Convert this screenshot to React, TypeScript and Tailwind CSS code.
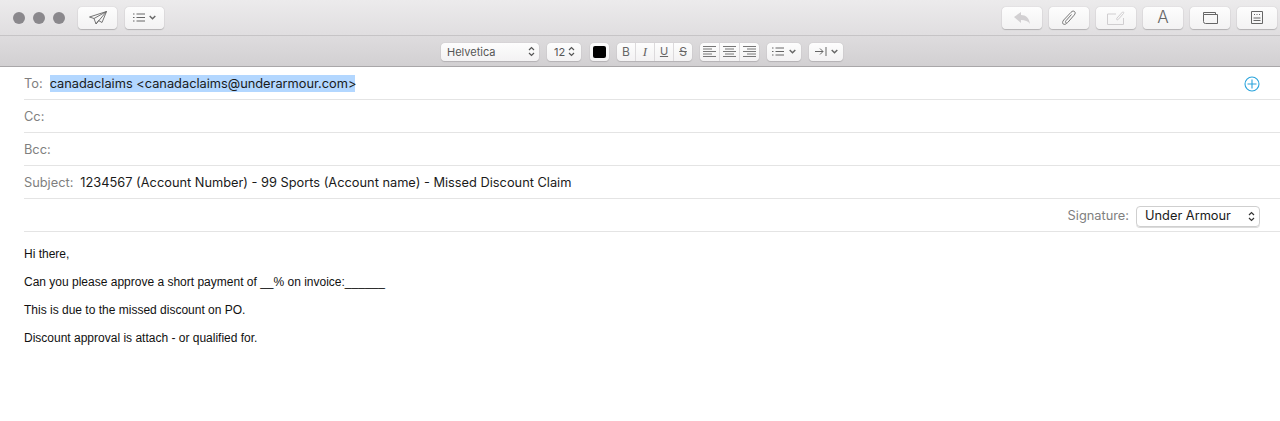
import React from 'react'

const btn = 'flex items-center rounded-[4px] bg-gradient-to-b from-[#fdfdfd] to-[#f3f2f3] shadow-[0_0_1px_#a9a7a9,0_1px_1px_#b5b3b5]'
const sans = 'font-["Inter",sans-serif]'

function Chevrons({ color = '#555' }: { color?: string }) {
    return (
        <svg width='7' height='11' viewBox='0 0 7 11' fill='none' stroke={color} strokeWidth='1.2'>
            <path d='M1 4l2.5-2.5L6 4' />
            <path d='M1 7l2.5 2.5L6 7' />
        </svg>
    )
}

function Chevron() {
    return (
        <svg width='7' height='5' viewBox='0 0 7 5' fill='none' stroke='#666' strokeWidth='1.4'>
            <path d='M.7.9l2.8 2.8L6.3.9' />
        </svg>
    )
}

function ListIcon({ w = 12 }: { w?: number }) {
    return (
        <svg width={w} height='9' viewBox='0 0 12 9' fill='none' stroke='#666' strokeWidth='1'>
            <path d='M0 1h1.500M0 4.500h1.500M0 8h1.500M3.500 1H12M3.500 4.500H12M3.500 8H12' />
        </svg>
    )
}

function AlignIcon({ kind }: { kind: 'left' | 'center' | 'right' }) {
    const d = {
        left: 'M0 .5h13M0 3h9M0 5.500h13M0 8h9M0 10.500h13',
        center: 'M0 .5h13M2 3h9M0 5.500h13M2 8h9M0 10.500h13',
        right: 'M0 .5h13M4 3h9M0 5.500h13M4 8h9M0 10.500h13',
    }[kind]
    return (
        <svg width='13' height='11' viewBox='0 0 13 11' fill='none' stroke='#777' strokeWidth='1'>
            <path d={d} />
        </svg>
    )
}

function Toolbar() {
    return (
        <div className='flex h-[36px] items-center justify-between border-b border-[#c6c4c6] bg-gradient-to-b from-[#ecebec] to-[#e0dee0] pl-[13px] pr-[3px]'>
            <div className='flex items-center'>
                <div className='h-[12px] w-[12px] rounded-full bg-[#8a888c]'></div>
                <div className='ml-[8px] h-[12px] w-[12px] rounded-full bg-[#8a888c]'></div>
                <div className='ml-[8px] h-[12px] w-[12px] rounded-full bg-[#8a888c]'></div>
                <div className={`${btn} ml-[13px] h-[22px] w-[39px] justify-center`}>
                    <svg width='18' height='14' viewBox='0 0 18 14' fill='none' stroke='#666' strokeWidth='0.9' strokeLinejoin='round'>
                        <path d='M17.500.5L.5 6l4.500 1.500L7 13l2.500-3.500 3.500 2zM17.500.5L5 7.500M17.500.5L7 13' />
                    </svg>
                </div>
                <div className={`${btn} ml-[8px] h-[22px] w-[39px] justify-center gap-[4px]`}>
                    <ListIcon />
                    <Chevron />
                </div>
            </div>
            <div className='flex items-center gap-[7px]'>
                <div className={`${btn} h-[22px] w-[40px] justify-center`}>
                    <svg width='16' height='12' viewBox='0 0 16 12' fill='#d2d0d2'>
                        <path d='M0 5l7-5v3c5 0 8 3 9 9-2-3-5-4-9-4v3z' />
                    </svg>
                </div>
                <div className={`${btn} h-[22px] w-[40px] justify-center`}>
                    <svg width='14' height='15' viewBox='0 0 14 15' fill='none' stroke='#777' strokeWidth='1'>
                        <path d='M9.500 4.500L4 10.700c-.8 1-.6 1.700-.1 2.100.5.400 1.200.4 2-.5l6.200-7.100c1.300-1.500 1.400-2.800.5-3.600-1-.9-2.400-.6-3.600.7L1.700 10c-1.500 1.800-1.300 3.200-.5 4 .9.700 2.300.5 3.500-.8' />
                    </svg>
                </div>
                <div className={`${btn} h-[22px] w-[40px] justify-center`}>
                    <svg width='18' height='14' viewBox='0 0 18 14' fill='none' stroke='#d0ced0' strokeWidth='1'>
                        <path d='M9 3H.5v10.500h16V7' />
                        <path d='M15.500 1L10 7c-1 1.200 0 2.500 1.200 1.500l5.300-6c.8-1-.2-2-1-1.500z' />
                    </svg>
                </div>
                <div className={`${btn} h-[22px] w-[40px] justify-center font-["Inter",sans-serif] text-[17px] font-light text-[#666]`}>A</div>
                <div className={`${btn} h-[22px] w-[40px] justify-center`}>
                    <svg width='15' height='12' viewBox='0 0 15 12' fill='none' stroke='#666' strokeWidth='1'>
                        <path d='M.5 2.500V.5h12v2' />
                        <path d='M.5 2.500h14v9h-12a2 2 0 0 1 -2-2z' />
                    </svg>
                </div>
                <div className={`${btn} h-[22px] w-[40px] justify-center`}>
                    <svg width='12' height='13' viewBox='0 0 12 13' fill='none' stroke='#666' strokeWidth='1'>
                        <path d='M.5.5h11v12H.5zM3 3.500h1M5.500 3.500h1M8 3.500h1M2.500 7h7M2.500 9.500h7' />
                    </svg>
                </div>
            </div>
        </div>
    )
}

function FormatBar() {
    const seg = 'flex h-full items-center justify-center border-r border-[#dcdadc]'
    return (
        <div className='flex h-[31px] items-center justify-center border-b border-[#a9a7a9] bg-gradient-to-b from-[#dedcde] to-[#d2d0d2] pl-[4px] pt-[1px]'>
            <div className={`${btn} h-[18px] w-[98px] justify-between pl-[6px] pr-[4px] ${sans} text-[11px] text-[#555]`}>
                <span className='pt-[1px]'>Helvetica</span>
                <Chevrons />
            </div>
            <div className={`${btn} ml-[8px] h-[18px] w-[34px] justify-center gap-[3px] pl-[1px] ${sans} text-[11px] text-[#555]`}>
                <span className='pt-[1px]'>12</span>
                <Chevrons />
            </div>
            <div className={`${btn} ml-[9px] h-[18px] w-[19px] justify-center`}>
                <div className='h-[12px] w-[13px] rounded-[2px] bg-black'></div>
            </div>
            <div className={`${btn} ml-[8px] h-[18px] w-[75px]`}>
                <div className={`${seg} w-[19px] ${sans} text-[12px] text-[#666]`}>B</div>
                <div className={`${seg} w-[19px] font-["Liberation_Serif",serif] text-[13px] italic text-[#666]`}>I</div>
                <div className={`${seg} w-[19px] ${sans} text-[11px] text-[#666] underline`}>U</div>
                <div className={`flex h-full w-[18px] items-center justify-center ${sans} text-[12px] text-[#666] line-through`}>S</div>
            </div>
            <div className={`${btn} ml-[8px] h-[18px] w-[59px]`}>
                <div className={`${seg} w-[20px]`}><AlignIcon kind='left' /></div>
                <div className={`${seg} w-[20px]`}><AlignIcon kind='center' /></div>
                <div className='flex h-full w-[19px] items-center justify-center'><AlignIcon kind='right' /></div>
            </div>
            <div className={`${btn} ml-[8px] h-[18px] w-[34px] justify-center gap-[5px]`}>
                <ListIcon />
                <Chevron />
            </div>
            <div className={`${btn} ml-[8px] h-[18px] w-[34px] justify-center gap-[4px]`}>
                <svg width='12' height='9' viewBox='0 0 12 9' fill='none' stroke='#666' strokeWidth='1'>
                    <path d='M0 4.500h8M5 1.500l3 3-3 3M11 0v9' />
                </svg>
                <Chevron />
            </div>
        </div>
    )
}

function Row({ label, children }: { label: string; children?: React.ReactNode }) {
    return (
        <div className={`flex h-[33px] items-center border-b border-[#e4e4e4] pt-[1px] pr-[20px] ${sans} text-[12.8px]`}>
            <span className='mr-[7px] text-[#7f7f7f]'>{label}</span>
            {children}
        </div>
    )
}

export default function App() {
    return (
        <div className='h-[421px] w-[1280px] overflow-hidden bg-white'>
            <Toolbar />
            <FormatBar />
            <div className='ml-[24px]'>
                <div className={`flex h-[33px] items-center border-b border-[#e4e4e4] pt-[1px] pr-[20px] ${sans} text-[12.8px]`}>
                    <span className='mr-[7px] text-[#7f7f7f]'>To:</span>
                    <span className='flex h-[17px] w-[305px] items-center whitespace-nowrap bg-[#b3d7ff] text-[#1a1a1a]'>canadaclaims &lt;canadaclaims@underarmour.com&gt;</span>
                    <svg className='ml-auto' width='16' height='16' viewBox='0 0 16 16' fill='none' stroke='#2aa4dc' strokeWidth='1.1'>
                        <circle cx='8' cy='8' r='7' />
                        <path d='M8 3.500v9M3.500 8h9' />
                    </svg>
                </div>
                <Row label='Cc:' />
                <Row label='Bcc:' />
                <Row label='Subject:'>
                    <span className='whitespace-nowrap text-[#1a1a1a]'>1234567 (Account Number) - 99 Sports (Account name) - Missed Discount Claim</span>
                </Row>
                <div className={`flex h-[33px] items-center justify-end border-b border-[#e4e4e4] pt-[2px] pr-[20px] ${sans} text-[12.8px]`}>
                    <span className='mr-[7px] text-[#7f7f7f]'>Signature:</span>
                    <div className='flex h-[21px] w-[124px] items-center justify-between rounded-[4px] border border-[#cfcfcf] pl-[8px] pr-[4px] text-[#1a1a1a] shadow-[0_1px_0_#dcdcdc]'>
                        Under Armour
                        <Chevrons color='#333' />
                    </div>
                </div>
            </div>
            <div className='ml-[24px] flex flex-col gap-[14px] pt-[15px] font-["Liberation_Sans",sans-serif] text-[12px] leading-[14px] text-[#111]'>
                <div>Hi there,</div>
                <div>Can you please approve a short payment of __% on invoice:______</div>
                <div>This is due to the missed discount on PO.</div>
                <div>Discount approval is attach - or qualified for.</div>
            </div>
        </div>
    )
}
